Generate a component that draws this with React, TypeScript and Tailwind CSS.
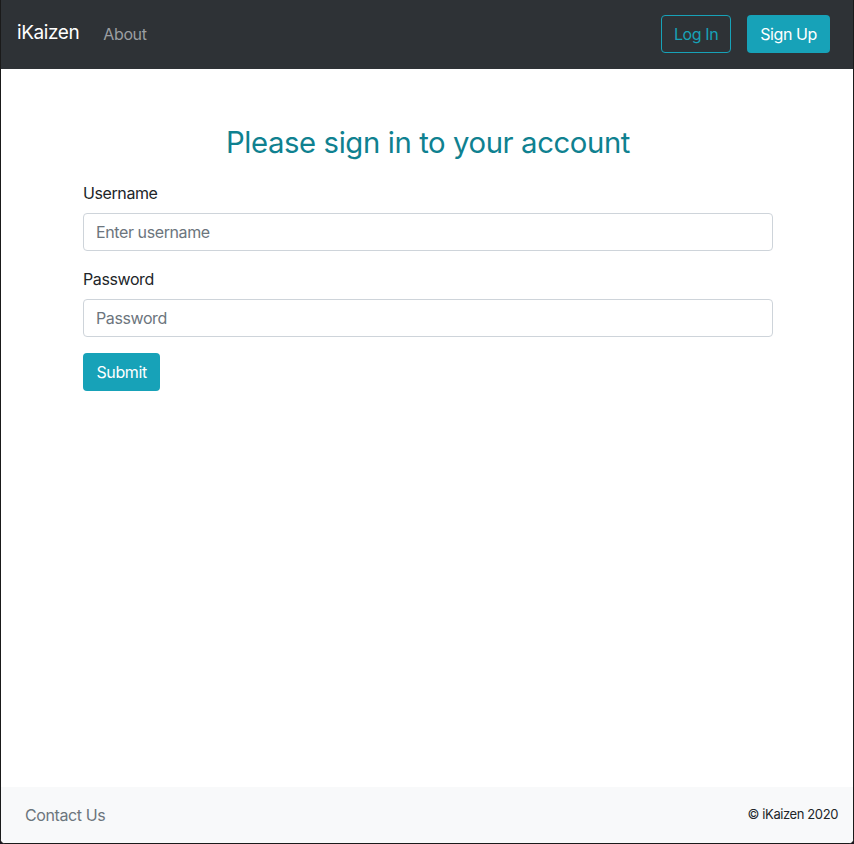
export default function App() {
  return (
    <div className="min-h-screen bg-[#1c1820] tracking-[-0.025em]" style={{ fontFamily: 'Inter, "Noto Sans", sans-serif' }}>
      <div className="flex min-h-screen flex-col overflow-hidden rounded-b-[5px] border-x border-b border-[#1a1a1a] bg-white">
        <nav className="flex h-[69px] items-center bg-[#2e3236] pb-[2px] pl-4 pr-[23px]">
          <span className="text-[19px] text-white">iKaizen</span>
          <a className="ml-[24px] text-[16px] text-[#9b9ea1]">About</a>
          <div className="ml-auto flex gap-4">
            <button className="h-[38px] rounded border border-[#17a2b8] px-3 text-[16px] text-[#17a2b8]">Log In</button>
            <button className="h-[38px] rounded bg-[#17a2b8] px-[13px] text-[16px] text-white">Sign Up</button>
          </div>
        </nav>

        <main className="flex-1">
          <div className="mx-auto w-[720px] pl-[16px] pr-[14px] pt-[55px]">
            <h2 className="mb-[19px] text-center text-[29.3px] leading-[38px] text-[#0f8190]">
              Please sign in to your account
            </h2>
            <div className="mb-4">
              <label className="mb-2 block text-[16px] leading-6 text-[#212529]">Username</label>
              <input
                placeholder="Enter username"
                className="block h-[38px] w-full rounded border border-[#ced4da] px-3 text-[16px] text-[#495057] placeholder:text-[#6c757d] focus:outline-none"
              />
            </div>
            <div className="mb-4">
              <label className="mb-2 block text-[16px] leading-6 text-[#212529]">Password</label>
              <input
                type="password"
                placeholder="Password"
                className="block h-[38px] w-full rounded border border-[#ced4da] px-3 text-[16px] text-[#495057] placeholder:text-[#6c757d] focus:outline-none"
              />
            </div>
            <button className="h-[38px] rounded bg-[#17a2b8] px-[13.5px] text-[16px] text-white">Submit</button>
          </div>
        </main>

        <footer className="flex h-[56px] items-center justify-between bg-[#f8f9fa] pl-6 pr-[15px]">
          <a className="text-[16px] text-[#6c757d]">Contact Us</a>
          <span className="text-[13px] text-[#212529]">© iKaizen 2020</span>
        </footer>
      </div>
    </div>
  );
}
